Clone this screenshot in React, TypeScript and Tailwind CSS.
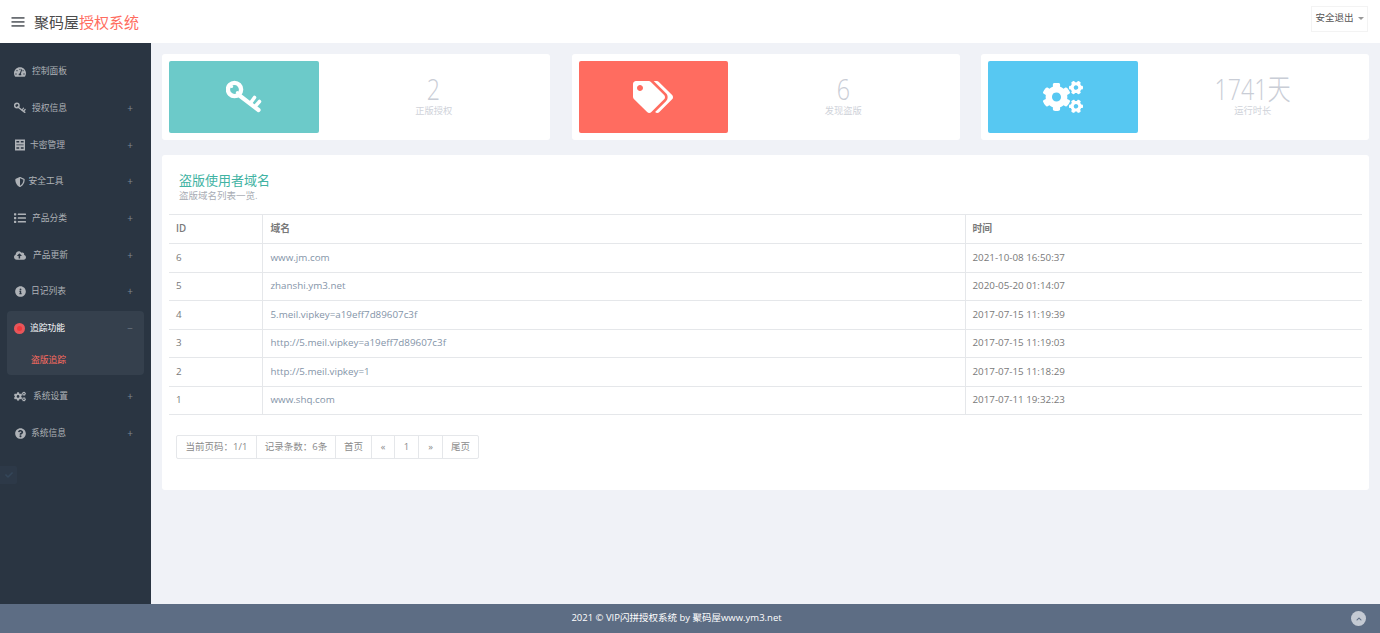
import { FaTachometerAlt, FaShieldAlt, FaList, FaCloudUploadAlt, FaInfoCircle, FaCogs, FaQuestionCircle, FaTags, FaChevronUp, FaCheck } from "react-icons/fa";
import type { ReactNode } from "react";

const CJK = "font-['Open_Sans','Noto_Sans_CJK_SC',sans-serif]";

function KeyIcon({ size }: { size: number }) {
  return (
    <svg width={size} height={size} viewBox="0 0 36 36" fill="none" stroke="currentColor" strokeLinecap="round">
      <circle cx="8.5" cy="10.5" r="6.6" strokeWidth="4.4" />
      <circle cx="5.6" cy="7.6" r="1.5" fill="currentColor" stroke="none" />
      <circle cx="11.4" cy="13.4" r="1.5" fill="currentColor" stroke="none" />
      <path d="M13.5 16.5 L32.5 31" strokeWidth="4.2" />
      <path d="M24.5 24 L28.5 18.5 M29 27.5 L33.5 22.5" strokeWidth="3.6" />
    </svg>
  );
}

function CardIcon({ size }: { size: number }) {
  return (
    <svg width={size} height={size} viewBox="0 0 12 12" fill="currentColor">
      <path
        d="M1 0.5h10v11H1z M2.4 2v1.4h2.8V2z M6.8 2v1.4h2.8V2z M2.4 5.4v0.9h7.2V5.4z M2.4 8.2v1.6h2.8V8.2z M6.8 8.2v1.6h2.8V8.2z"
        fillRule="evenodd"
      />
    </svg>
  );
}

function MenuBars() {
  return (
    <svg width="14" height="12" viewBox="0 0 14 12" fill="#6b6f74">
      <rect x="0.5" y="1" width="13" height="1.8" />
      <rect x="0.5" y="5" width="13" height="1.8" />
      <rect x="0.5" y="9" width="13" height="1.8" />
    </svg>
  );
}

function RedDot() {
  return (
    <span className="flex size-[11px] items-center justify-center rounded-full bg-[#e8565a]">
      <span className="size-[5px] rounded-full bg-[#f0383c]" />
    </span>
  );
}

const menuTop: { icon: ReactNode; label: string; plus: boolean; gap: string }[] = [
  { icon: <FaTachometerAlt size={12} />, label: "控制面板", plus: false, gap: "ml-[6px]" },
  { icon: <KeyIcon size={12} />, label: "授权信息", plus: true, gap: "ml-[6px]" },
  { icon: <CardIcon size={12} />, label: "卡密管理", plus: true, gap: "ml-[4px]" },
  { icon: <FaShieldAlt size={10} />, label: "安全工具", plus: true, gap: "ml-[2.5px]" },
  { icon: <FaList size={12} />, label: "产品分类", plus: true, gap: "ml-[6px]" },
  { icon: <FaCloudUploadAlt size={13} />, label: "产品更新", plus: true, gap: "ml-[7px]" },
  { icon: <FaInfoCircle size={11} />, label: "日记列表", plus: true, gap: "ml-[5px]" },
];

const menuBottom: { icon: ReactNode; label: string; plus: boolean; gap: string }[] = [
  { icon: <FaCogs size={13} />, label: "系统设置", plus: true, gap: "ml-[7px]" },
  { icon: <FaQuestionCircle size={11} />, label: "系统信息", plus: true, gap: "ml-[5px]" },
];

const rows = [
  { id: 6, domain: "www.jm.com", time: "2021-10-08 16:50:37" },
  { id: 5, domain: "zhanshi.ym3.net", time: "2020-05-20 01:14:07" },
  { id: 4, domain: "5.meil.vipkey=a19eff7d89607c3f", time: "2017-07-15 11:19:39" },
  { id: 3, domain: "http://5.meil.vipkey=a19eff7d89607c3f", time: "2017-07-15 11:19:03" },
  { id: 2, domain: "http://5.meil.vipkey=1", time: "2017-07-15 11:18:29" },
  { id: 1, domain: "www.shq.com", time: "2017-07-11 19:32:23" },
];

const pager = [
  { text: "当前页码：1/1", w: "w-[79px]" },
  { text: "记录条数：6条", w: "w-[79px]" },
  { text: "首页", w: "w-[36px]" },
  { text: "«", w: "w-[23px]" },
  { text: "1", w: "w-[24px]" },
  { text: "»", w: "w-[24px]" },
  { text: "尾页", w: "w-[36px]" },
];

function MenuItem({ icon, label, plus, gap }: { icon: ReactNode; label: string; plus: boolean; gap: string }) {
  return (
    <div className="flex h-[36.7px] items-center pl-[14px] pr-[18px] text-[#aeb2b7]">
      <span className="flex w-[12px] justify-center">{icon}</span>
      <span className={`${gap} text-[8.75px]`}>{label}</span>
      {plus && <span className="ml-auto text-[10px] text-[#7f8791]">+</span>}
    </div>
  );
}

function StatCard({ color, icon, value, label }: { color: string; icon: ReactNode; value: string; label: string }) {
  return (
    <div className="flex h-[86px] rounded-[3px] bg-white p-[7px]">
      <div className={`flex w-[149.5px] items-center justify-center rounded-[2px] text-white ${color}`}>{icon}</div>
      <div className="flex flex-1 flex-col items-center pl-[6px] pt-[13px] text-center">
        <div className="scale-x-[0.8] text-[29px] font-light leading-[30px] text-[#c9cdd6]">{value}</div>
        <div className="text-[9.25px] leading-[13px] text-[#d0d3da]">{label}</div>
      </div>
    </div>
  );
}

export default function App() {
  return (
    <div className={`flex h-[633px] flex-col overflow-hidden bg-[#f0f2f7] ${CJK}`}>
      {/* Header */}
      <header className="flex h-[43px] shrink-0 items-center bg-white pl-[11px] pr-[12px]">
        <MenuBars />
        <div className="ml-[9px] mt-[1px] text-[15px] text-[#4b4b4b]">
          聚码屋<span className="text-[#ff6c60]">授权系统</span>
        </div>
        <button className="mb-[6px] ml-auto flex h-[26px] w-[57px] items-center justify-center gap-[4px] border border-[#f3f3f3] bg-white text-[9.5px] text-[#555]">
          安全退出
          <span className="border-x-[3px] border-t-[3px] border-x-transparent border-t-[#999]" />
        </button>
      </header>

      <div className="flex min-h-0 flex-1">
        {/* Sidebar */}
        <aside className="w-[151px] shrink-0 bg-[#2a3542] pt-[10.4px]">
          {menuTop.map(m => <MenuItem key={m.label} {...m} />)}
          <div className="mb-[3px] ml-[7px] mr-[7px] mt-[1px] h-[64px] rounded-[4px] bg-[#35404d]">
            <div className="flex h-[35px] items-center pl-[7px] pr-[11px] text-white">
              <RedDot />
              <span className="ml-[5px] text-[8.75px]">追踪功能</span>
              <span className="ml-auto text-[10px] text-[#6e7782]">−</span>
            </div>
            <div className="pl-[24px] pt-[8px] text-[8.75px] leading-[12px] text-[#ff6c60]">盗版追踪</div>
          </div>
          {menuBottom.map(m => <MenuItem key={m.label} {...m} />)}
          <div className="mt-[14px] flex h-[18px] w-[17px] items-center justify-center rounded-r-[2px] bg-[#2d3948] text-[#344659]">
            <FaCheck size={8} />
          </div>
        </aside>

        {/* Main */}
        <main className="min-w-0 flex-1 px-[11px] pt-[11px]">
          <div className="grid grid-cols-3 gap-[21.5px]">
            <StatCard color="bg-[#6ccac9]" icon={<KeyIcon size={36} />} value="2" label="正版授权" />
            <StatCard color="bg-[#ff6c60]" icon={<FaTags size={40} />} value="6" label="发现盗版" />
            <StatCard color="bg-[#57c8f2]" icon={<FaCogs size={40} />} value="1741天" label="运行时长" />
          </div>

          <section className="mt-[15px] h-[335px] rounded-[3px] bg-white px-[7px] pt-[16px]">
            <div className="pl-[10px]">
              <h2 className="text-[13px] font-normal leading-[18px] text-[#41b3a3]">盗版使用者域名</h2>
              <p className="text-[9.5px] leading-[14px] text-[#a9adb5]">盗版域名列表一览.</p>
            </div>
            <table className="mt-[11px] w-full table-fixed border-collapse text-left text-[9.8px] text-[#797979]">
              <colgroup>
                <col className="w-[93px]" />
                <col className="w-[703px]" />
                <col />
              </colgroup>
              <thead>
                <tr className="h-[29px] border-y border-[#e5e7ea]">
                  <th className="pl-[7px] font-semibold">ID</th>
                  <th className="border-l border-[#e5e7ea] pl-[8px] font-semibold">域名</th>
                  <th className="border-l border-[#e5e7ea] pl-[7px] font-semibold">时间</th>
                </tr>
              </thead>
              <tbody>
                {rows.map(r => (
                  <tr key={r.id} className="h-[28.5px] border-b border-[#e5e7ea]">
                    <td className="pl-[7px] pt-[1px]">{r.id}</td>
                    <td className="border-l border-[#e5e7ea] pl-[8px] pt-[1px] text-[#8494a8]">{r.domain}</td>
                    <td className="border-l border-[#e5e7ea] pl-[7px] pt-[1px]">{r.time}</td>
                  </tr>
                ))}
              </tbody>
            </table>
            <div className="ml-[7px] mt-[20px] flex h-[24px] w-fit rounded-[2px] border border-[#e5e7ea]">
              {pager.map((p, i) => (
                <span
                  key={p.text}
                  className={`flex items-center justify-center text-[9.5px] text-[#8a8a8a] ${p.w} ${i > 0 ? "border-l border-[#e5e7ea]" : ""}`}
                >
                  {p.text}
                </span>
              ))}
            </div>
          </section>
        </main>
      </div>

      {/* Footer */}
      <footer className="relative flex h-[29px] shrink-0 items-center justify-center bg-[#5d6d84] pr-[27px] text-[9.5px] text-white">
        2021 © VIP闪拼授权系统 by 聚码屋www.ym3.net
        <span className="absolute right-[14px] top-[7px] flex size-[15px] items-center justify-center rounded-full bg-[#c4cad3] text-[#5d6d84]">
          <FaChevronUp size={6} />
        </span>
      </footer>
    </div>
  );
}
